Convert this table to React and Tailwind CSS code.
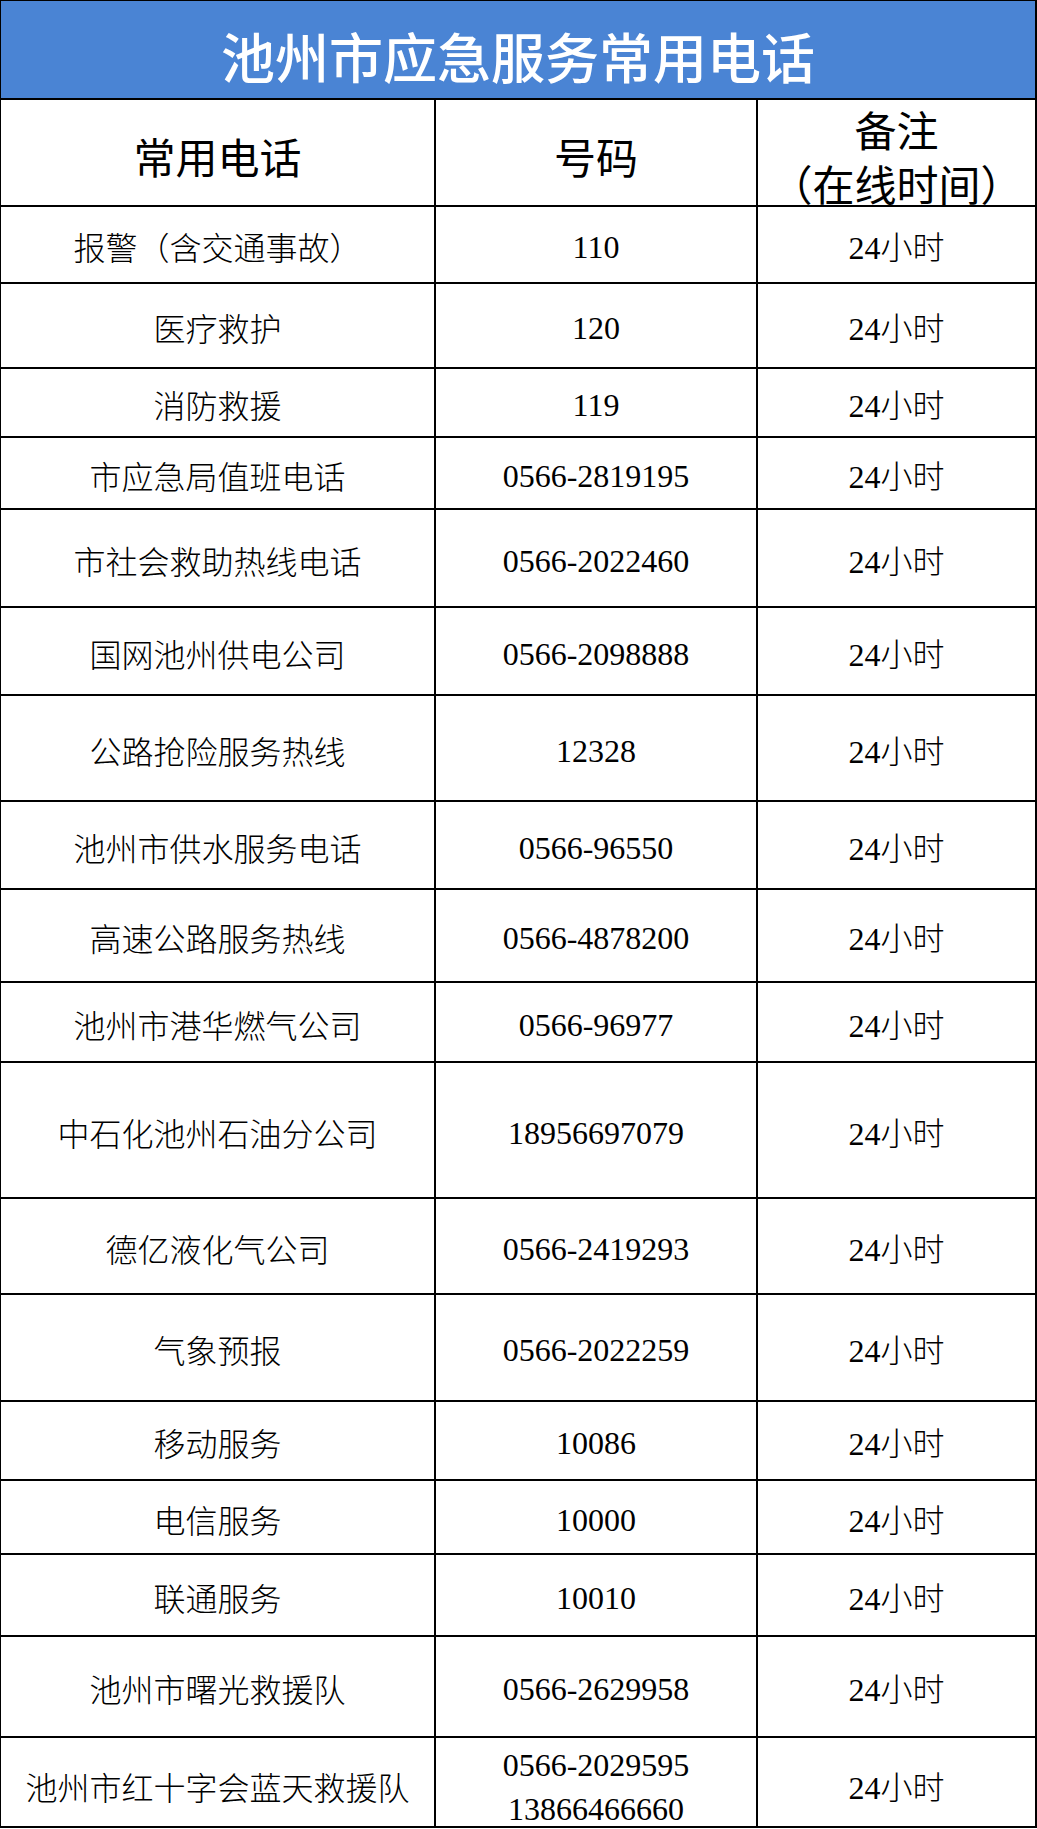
import React from "react";

const rows = [
  { name: "报警（含交通事故）", num: ["110"], h: "h-[77px]" },
  { name: "医疗救护", num: ["120"], h: "h-[85px]" },
  { name: "消防救援", num: ["119"], h: "h-[69px]" },
  { name: "市应急局值班电话", num: ["0566-2819195"], h: "h-[72px]" },
  { name: "市社会救助热线电话", num: ["0566-2022460"], h: "h-[98px]" },
  { name: "国网池州供电公司", num: ["0566-2098888"], h: "h-[88px]" },
  { name: "公路抢险服务热线", num: ["12328"], h: "h-[106px]" },
  { name: "池州市供水服务电话", num: ["0566-96550"], h: "h-[88px]" },
  { name: "高速公路服务热线", num: ["0566-4878200"], h: "h-[93px]" },
  { name: "池州市港华燃气公司", num: ["0566-96977"], h: "h-[80px]" },
  { name: "中石化池州石油分公司", num: ["18956697079"], h: "h-[136px]" },
  { name: "德亿液化气公司", num: ["0566-2419293"], h: "h-[96px]" },
  { name: "气象预报", num: ["0566-2022259"], h: "h-[107px]" },
  { name: "移动服务", num: ["10086"], h: "h-[79px]" },
  { name: "电信服务", num: ["10000"], h: "h-[74px]" },
  { name: "联通服务", num: ["10010"], h: "h-[82px]" },
  { name: "池州市曙光救援队", num: ["0566-2629958"], h: "h-[101px]" },
  { name: "池州市红十字会蓝天救援队", num: ["0566-2029595", "13866466660"], h: "h-[90px]" },
];

export default function App() {
  return (
    <div className="w-[1037px] bg-white">
      <div className="border-t border-l border-r-2 border-black">
        <div className="h-[99px] border-b-2 border-black bg-[#4a84d4] flex items-center justify-center pt-[12px]">
          <span
            className="text-white text-[54px] font-medium leading-none"
            style={{ fontFamily: "'Noto Sans CJK SC', 'Noto Sans', sans-serif" }}
          >
            池州市应急服务常用电话
          </span>
        </div>

        <div
          className="grid grid-cols-[435px_322px_1fr] h-[107px] border-b-2 border-black text-black"
          style={{ fontFamily: "'Liberation Serif', 'Noto Sans CJK SC', serif" }}
        >
          <div className="border-r-2 border-black flex items-center justify-center pt-[6px] text-[42px] leading-none">
            常用电话
          </div>
          <div className="border-r-2 border-black flex items-center justify-center pt-[6px] text-[42px] leading-none">
            号码
          </div>
          <div className="flex flex-col items-center justify-center pt-[6px] text-[42px] leading-[54px]">
            <span>备注</span>
            <span>（在线时间）</span>
          </div>
        </div>

        {rows.map((r, i) => (
          <div
            key={i}
            className={`grid grid-cols-[435px_322px_1fr] border-b-2 border-black text-black text-[32px] ${r.h}`}
            style={{ fontFamily: "'Liberation Serif', 'Noto Sans CJK SC', serif" }}
          >
            <div className="border-r-2 border-black flex items-center justify-center pt-[9px] leading-none font-light">
              {r.name}
            </div>
            <div className="border-r-2 border-black flex flex-col items-center justify-center pt-[5px] leading-[44px]">
              {r.num.map((n, j) => (
                <span key={j}>{n}</span>
              ))}
            </div>
            <div className="flex items-center justify-center pt-[7px] leading-none font-light">
              24小时
            </div>
          </div>
        ))}
      </div>
    </div>
  );
}
